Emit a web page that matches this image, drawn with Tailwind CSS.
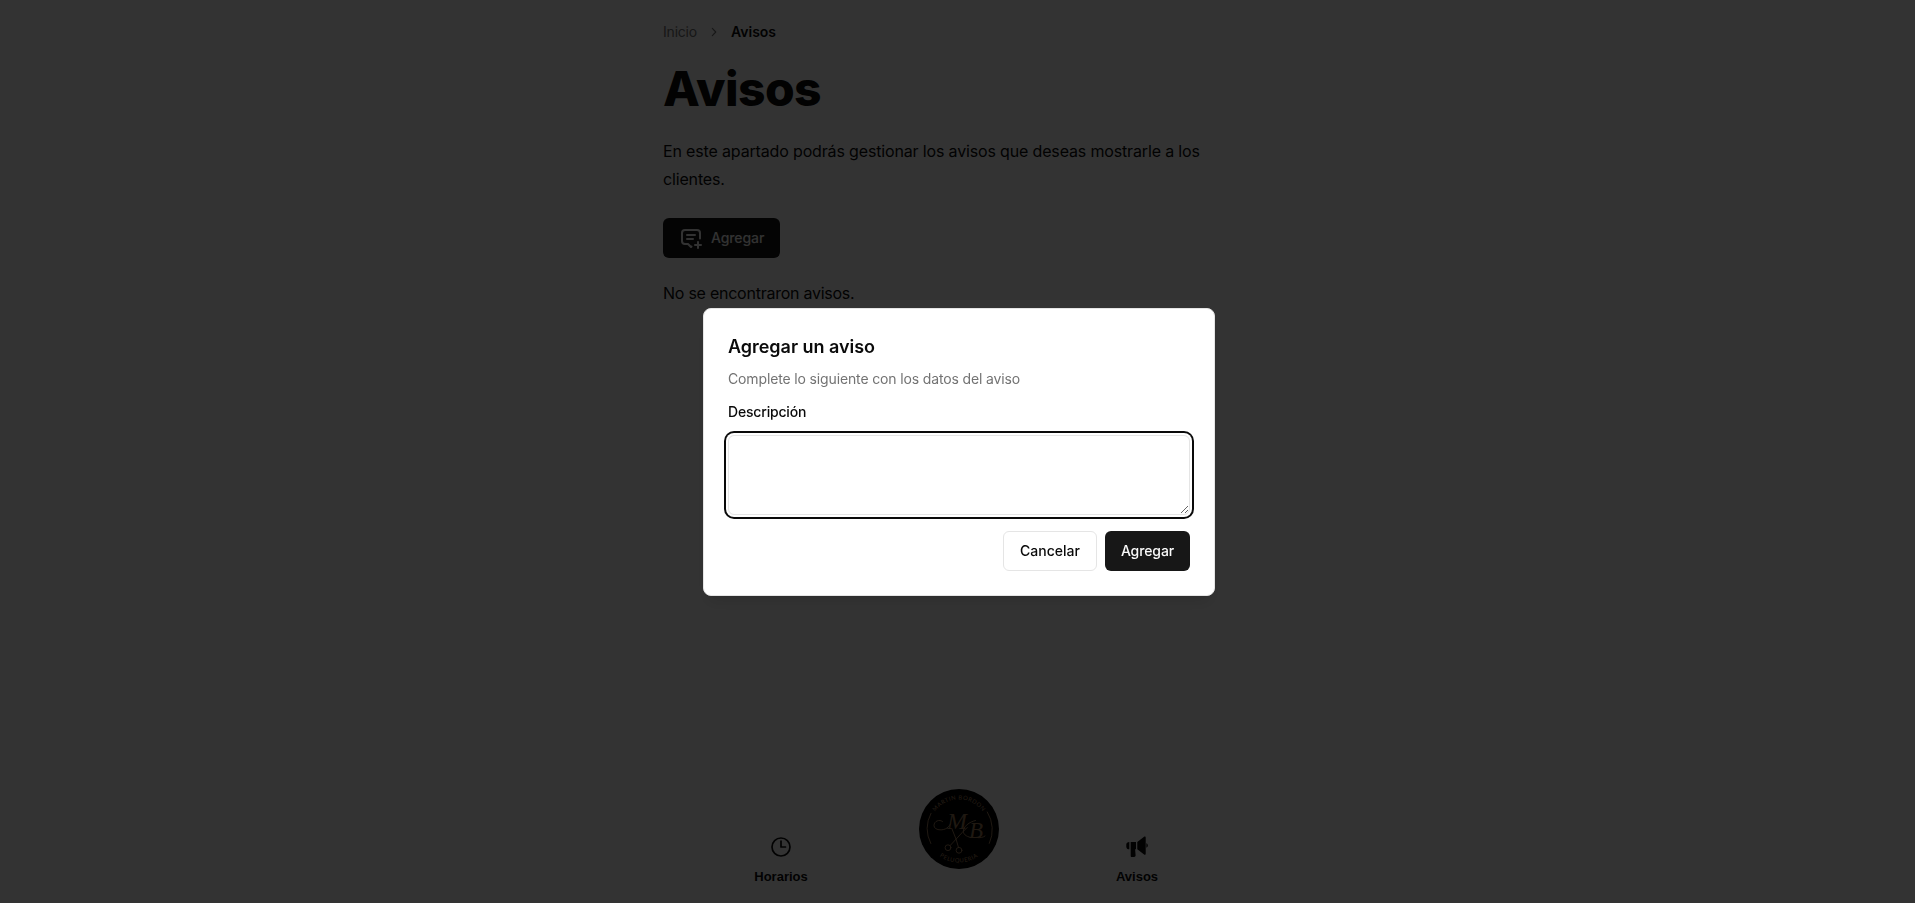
<!DOCTYPE html>
<html lang="es">
<head>
<meta charset="utf-8">
<title>Avisos</title>
<script src="https://cdn.jsdelivr.net/npm/@tailwindcss/browser@4"></script>
</head>
<body class="h-screen overflow-hidden bg-white font-['Inter',sans-serif] text-neutral-950 antialiased">
<div class="flex h-screen flex-col justify-between pl-[3px]">
  <main class="mx-auto w-[592px] pt-[22px]">
    <nav class="flex items-center gap-2.5 text-sm">
      <a class="tracking-[-0.2px] text-neutral-500">Inicio</a>
      <svg class="size-3.5 text-neutral-500" viewBox="0 0 15 15" fill="none" stroke="currentColor" stroke-width="1.2" stroke-linecap="round" stroke-linejoin="round"><path d="M5.700 3.500 9.400 7.500l-3.700 4"/></svg>
      <span class="font-semibold">Avisos</span>
    </nav>
    <h1 class="mt-[23px] text-5xl leading-none font-extrabold tracking-[-0.6px]">Avisos</h1>
    <p class="mt-6 leading-7 tracking-[-0.155px]">En este apartado podrás gestionar los avisos que deseas mostrarle a los clientes.</p>
    <button class="mt-[25px] flex h-10 w-[117px] items-center gap-2 rounded-md bg-neutral-900 px-4 text-sm font-medium tracking-[-0.1px] text-neutral-50">
      <svg class="size-6 shrink-0" viewBox="0 0 24 24" fill="none" stroke="currentColor" stroke-width="2" stroke-linecap="round" stroke-linejoin="round"><path d="M8 9h8M8 13h6M12.5 20.5l-.5 .5l-3 -3h-3a3 3 0 0 1 -3 -3v-8a3 3 0 0 1 3 -3h12a3 3 0 0 1 3 3v5.5M16 19h6M19 16v6"/></svg>
      Agregar
    </button>
    <p class="mt-[21px] leading-7 tracking-[-0.25px]">No se encontraron avisos.</p>
  </main>

  <footer class="mx-auto grid w-[534px] grid-cols-3 items-end justify-items-center pb-4 font-['Liberation_Sans',sans-serif] text-[13px] leading-5 font-bold">
    <div class="flex flex-col items-center gap-2">
      <svg class="size-6" viewBox="0 0 24 24" fill="none" stroke="currentColor" stroke-width="1.7" stroke-linecap="round" stroke-linejoin="round"><path d="M12 6v6h4.500m4.500 0a9 9 0 1 1-18 0 9 9 0 0 1 18 0Z"/></svg>
      <span>Horarios</span>
    </div>
    <svg class="mb-[18px] size-20" viewBox="0 0 80 80" fill="none">
      <defs>
        <path id="top" d="M10.500 40a29.500 29.500 0 0 1 59 0"/>
        <path id="bottom" d="M6.500 40a33.500 33.500 0 0 0 67 0"/>
      </defs>
      <circle cx="40" cy="40" r="40" fill="#000"/>
      <g fill="#b08a64" font-family="Lato, sans-serif" font-size="5.8" font-weight="400" text-anchor="middle">
        <text letter-spacing=".5"><textPath href="#top" startOffset="50%">MARTIN BORDON</textPath></text>
        <text letter-spacing=".6"><textPath href="#bottom" startOffset="50%">PELUQUERIA</textPath></text>
      </g>
      <g stroke="#b08a64" stroke-width=".9" stroke-linecap="round">
        <path d="M12 24.300a33 33 0 0 0-.2 30.200M68.300 23a33 33 0 0 1 2 31.400"/>
        <path d="M23.500 32.500c-3-2.500-8.500-.5-8.500 4 0 5 9 5.500 13 2.500 1.500-1 2.500-2.500 3.500-4M52 48.500c-5-1-8.500-3.500-7.500-7.500 1-4.500 7-8.500 12-9.500M58 48.500c3 .6 6 0 8-1.500"/>
        <path d="m31.200 56.500 12-13 5-5M39.500 58.500 37 50l-4-10"/>
        <circle cx="29" cy="58.700" r="2.900"/><circle cx="40" cy="61.300" r="2.900"/>
      </g>
      <g fill="#9c7a58" font-family="'Liberation Serif', serif" font-style="italic" font-weight="400">
        <text x="28" y="40" font-size="24">M</text>
        <text x="50" y="48.500" font-size="23">B</text>
      </g>
    </svg>
    <div class="flex flex-col items-center gap-2">
      <svg class="size-6" viewBox="0 0 24 24" fill="currentColor"><path d="M4.300 7v7.300C2.500 14.300 1.300 13.300 1.300 11.700V9.600C1.300 8 2.500 7 4.300 7ZM5.700 7H11v7.300h-.9l.5 6c0 1-.6 1.700-1.500 1.700H6.700c-.6 0-1-.4-1-1ZM12.300 7l6.800-5.300c.8-.6 1.600-.2 1.600.8v16.200c0 1-.8 1.400-1.600.8L12.300 14.300ZM21.400 8.300c.9.400 1.400 1.200 1.400 2.200s-.5 1.800-1.400 2.200Z"/></svg>
      <span>Avisos</span>
    </div>
  </footer>
</div>

<div class="fixed inset-0 flex items-center justify-center bg-black/80 pt-[1px] pl-[3px]">
  <div role="dialog" class="flex w-lg flex-col gap-4 rounded-lg border border-neutral-200 bg-white p-6 shadow-lg">
    <div class="flex flex-col gap-2">
      <h2 class="text-lg leading-7 font-semibold tracking-[-0.03px]">Agregar un aviso</h2>
      <p class="text-sm leading-5 tracking-[-0.14px] text-neutral-500">Complete lo siguiente con los datos del aviso</p>
    </div>
    <label class="text-sm leading-none font-medium tracking-[-0.18px]">Descripción</label>
    <textarea class="block h-20 w-full rounded-md border border-neutral-200 bg-white px-3 py-2 text-sm ring-2 ring-neutral-950 ring-offset-2 outline-none"></textarea>
    <div class="flex justify-end gap-2 text-sm font-medium">
      <button class="h-10 w-[94px] rounded-md border border-neutral-200 bg-white">Cancelar</button>
      <button class="h-10 w-[85px] rounded-md bg-neutral-900 tracking-[-0.1px] text-neutral-50">Agregar</button>
    </div>
  </div>
</div>
</body>
</html>
